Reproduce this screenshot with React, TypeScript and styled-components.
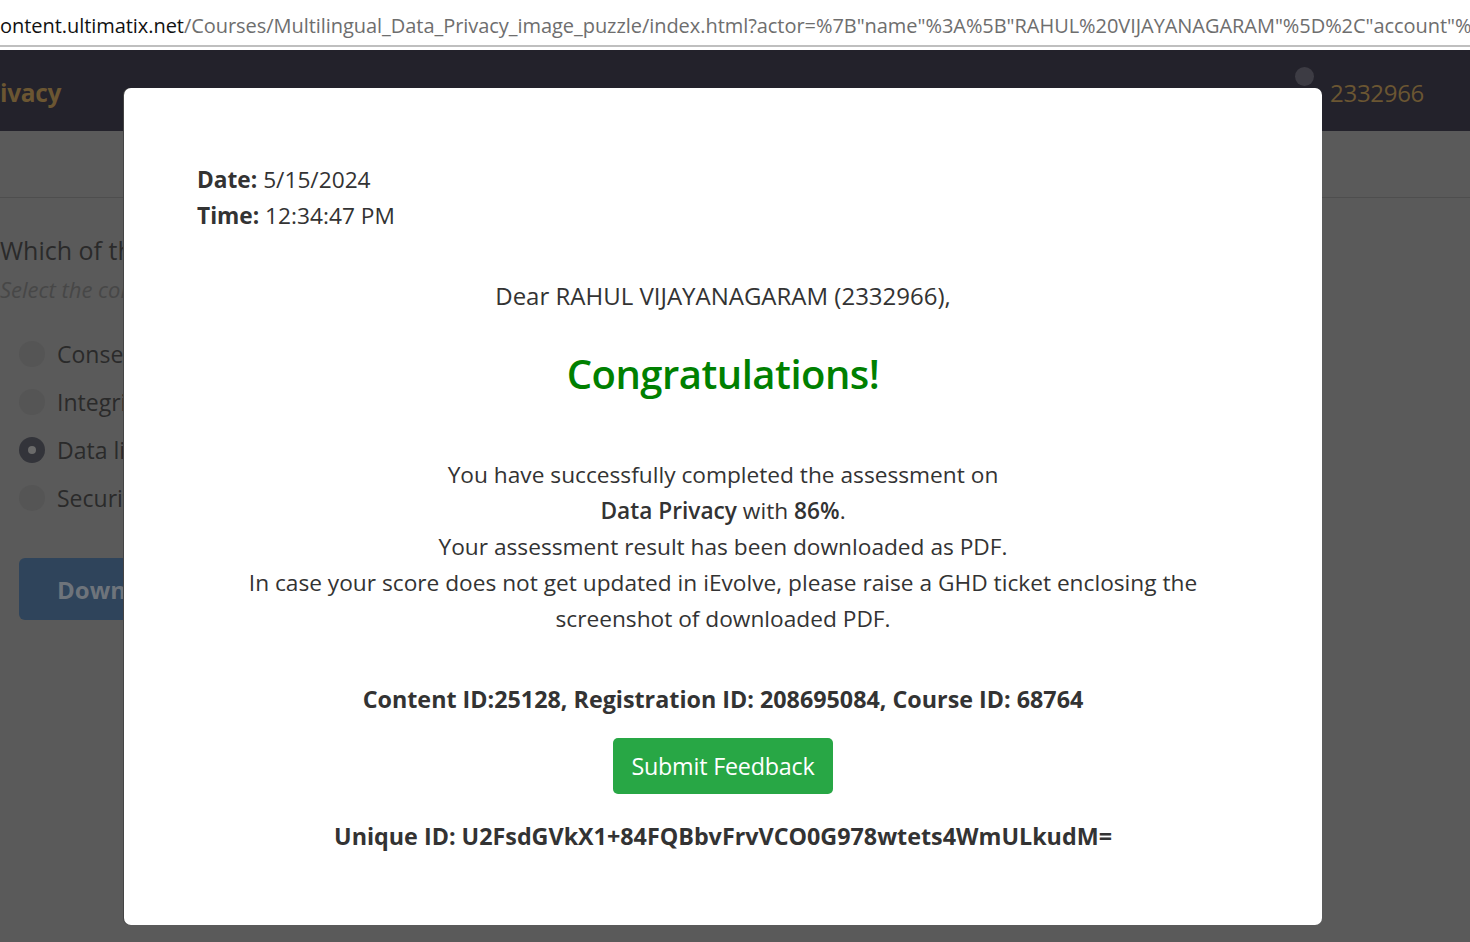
import React from "react";
import styled, { createGlobalStyle } from "styled-components";

const GlobalStyle = createGlobalStyle`
  html, body { margin: 0; padding: 0; background: #5a5a5a; overflow: hidden; }
  body { font-family: "Open Sans", "Noto Sans", sans-serif; }
  * { box-sizing: border-box; }
`;

const Shell = styled.div`
  position: relative;
  width: 1470px;
  height: 942px;
  overflow: hidden;
  display: flex;
  flex-direction: column;
  background: #5a5a5a;
`;

const AddressBar = styled.div`
  flex: none;
  height: 50px;
  display: flex;
  align-items: flex-start;
  padding-top: 12px;
  background: linear-gradient(to bottom, #fff 0, #fff 45px, #bfbfbf 45px, #bfbfbf 47px, #fff 47px);
  white-space: nowrap;
  overflow: hidden;
  font-size: 20px;
  letter-spacing: -0.05px;
  color: #6e6e6e;
`;

const Domain = styled.span`
  color: #111;
`;

const Header = styled.header`
  flex: none;
  height: 81px;
  background: #23222b;
  display: flex;
  align-items: center;
  justify-content: space-between;
  padding-right: 46px;
`;

const Brand = styled.div`
  font-size: 24.5px;
  font-weight: 700;
  color: #6b5632;
  letter-spacing: -0.3px;
  margin-top: 3px;
`;

const UserBox = styled.div`
  display: flex;
  align-items: center;
  gap: 16px;
  margin-top: 4px;
`;

const Avatar = styled.span`
  width: 19px;
  height: 19px;
  border-radius: 50%;
  background: #3d3c44;
  margin-bottom: 32px;
`;

const UserId = styled.span`
  font-size: 24px;
  color: #6b5632;
  letter-spacing: -0.3px;
`;

const SubBar = styled.div`
  flex: none;
  height: 67px;
  border-bottom: 1px solid #4e4e4e;
`;

const Question = styled.section`
  display: flex;
  flex-direction: column;
  padding: 34px 0 0 0;
`;

const QuestionText = styled.h2`
  margin: 0;
  font-size: 25px;
  font-weight: 400;
  line-height: 36px;
  color: #2a2a2a;
`;

const Hint = styled.div`
  font-size: 22px;
  font-style: italic;
  line-height: 36px;
  color: #474747;
  margin-top: 3px;
`;

const Options = styled.div`
  display: flex;
  flex-direction: column;
  padding-left: 19px;
  margin-top: 23px;
`;

const Option = styled.label`
  display: flex;
  align-items: center;
  gap: 12px;
  height: 48px;
  font-size: 23px;
  color: #2a2a2a;
`;

const Radio = styled.span<{ $on?: boolean }>`
  width: 26px;
  height: 26px;
  border-radius: 50%;
  background: ${(p) => (p.$on ? "#33343a" : "#555555")};
  display: flex;
  align-items: center;
  justify-content: center;
  &::after {
    content: "";
    width: 8px;
    height: 8px;
    border-radius: 50%;
    background: ${(p) => (p.$on ? "#6a6a6a" : "transparent")};
  }
`;

const DownloadButton = styled.button`
  margin: 36px 0 0 19px;
  width: 280px;
  height: 62px;
  border: none;
  border-radius: 6px;
  background: #2f445b;
  color: #6e747b;
  font-family: inherit;
  font-size: 24px;
  font-weight: 700;
  text-align: left;
  padding-left: 38px;
`;

const Modal = styled.div`
  position: absolute;
  left: 124px;
  top: 88px;
  width: 1198px;
  height: 837px;
  background: #fff;
  border-radius: 7px;
  box-shadow: -1px 0 0 #444;
  display: flex;
  flex-direction: column;
  padding: 74px 73px 0 73px;
  color: #333;
  font-size: 22.7px;
  line-height: 36px;
`;

const Meta = styled.div`
  display: flex;
  flex-direction: column;
`;

const Line = styled.div<{ $top?: number; $bold?: boolean; $size?: number }>`
  margin-top: ${(p) => p.$top ?? 0}px;
  text-align: center;
  font-weight: ${(p) => (p.$bold ? 700 : 400)};
  font-size: ${(p) => (p.$size ? `${p.$size}px` : "inherit")};
`;

const Label = styled.b`
  font-weight: 700;
`;

const Title = styled.h2`
  margin: 33px 0 0;
  text-align: center;
  color: #008000;
  font-size: 40px;
  font-weight: 600;
  line-height: 54px;
  letter-spacing: -0.5px;
`;

const Message = styled.p`
  margin: 56px 0 0;
  text-align: center;
`;

const Strong = styled.b`
  font-weight: 600;
`;

const ButtonRow = styled.div`
  display: flex;
  justify-content: center;
  margin-top: 21px;
`;

const FeedbackButton = styled.button`
  width: 220px;
  height: 56px;
  border: none;
  border-radius: 5px;
  background: #28a745;
  color: #fff;
  font-family: inherit;
  font-size: 23.3px;
  letter-spacing: -0.2px;
`;

export default function App() {
  return (
    <>
      <GlobalStyle />
      <Shell>
        <AddressBar>
          <Domain>ontent.ultimatix.net</Domain>
          /Courses/Multilingual_Data_Privacy_image_puzzle/index.html?actor=%7B"name"%3A%5B"RAHUL%20VIJAYANAGARAM"%5D%2C"account"%3A%5B%7B"accountServiceHomePage"
        </AddressBar>
        <Header>
          <Brand>ivacy</Brand>
          <UserBox>
            <Avatar />
            <UserId>2332966</UserId>
          </UserBox>
        </Header>
        <SubBar />
        <Question>
          <QuestionText>Which of the following is a principle of data privacy?</QuestionText>
          <Hint>Select the correct option</Hint>
          <Options>
            <Option>
              <Radio />
              Consent
            </Option>
            <Option>
              <Radio />
              Integrity
            </Option>
            <Option>
              <Radio $on />
              Data limitation
            </Option>
            <Option>
              <Radio />
              Security
            </Option>
          </Options>
          <DownloadButton>Download</DownloadButton>
        </Question>
        <Modal>
          <Meta>
            <div>
              <Label>Date:</Label> 5/15/2024
            </div>
            <div>
              <Label>Time:</Label> 12:34:47 PM
            </div>
          </Meta>
          <Line $top={44} $size={24}>
            Dear RAHUL VIJAYANAGARAM (2332966),
          </Line>
          <Title>Congratulations!</Title>
          <Message>
            You have successfully completed the assessment on
            <br />
            <Strong>Data Privacy</Strong> with <Strong>86%</Strong>.
            <br />
            Your assessment result has been downloaded as PDF.
            <br />
            In case your score does not get updated in iEvolve, please raise a GHD ticket enclosing the
            <br />
            screenshot of downloaded PDF.
          </Message>
          <Line $top={44} $bold $size={23.3}>
            Content ID:25128, Registration ID: 208695084, Course ID: 68764
          </Line>
          <ButtonRow>
            <FeedbackButton>Submit Feedback</FeedbackButton>
          </ButtonRow>
          <Line $top={24} $bold $size={23.3}>
            Unique ID: U2FsdGVkX1+84FQBbvFrvVCO0G978wtets4WmULkudM=
          </Line>
        </Modal>
      </Shell>
    </>
  );
}
